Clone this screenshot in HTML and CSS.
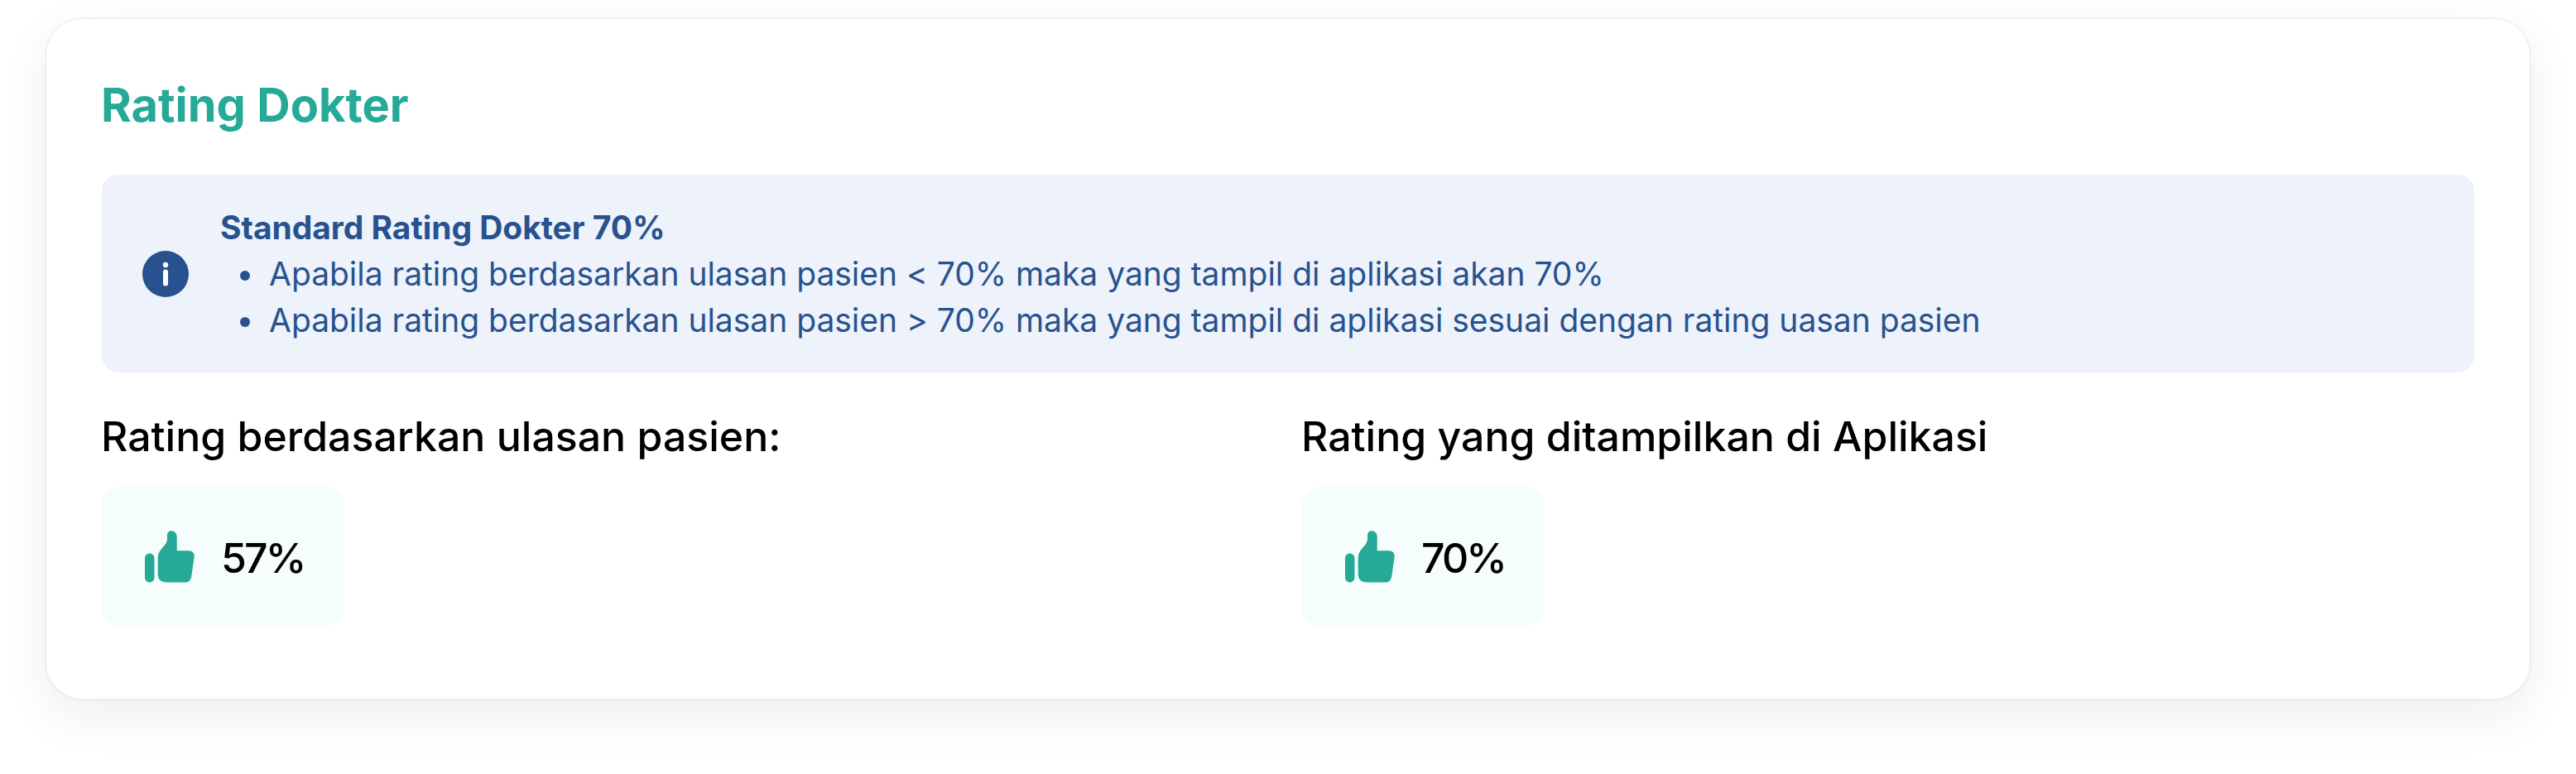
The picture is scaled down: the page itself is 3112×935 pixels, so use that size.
FILE: index.html
```html
<!DOCTYPE html>
<html lang="id">
<head>
    <meta charset="UTF-8">
    <meta name="viewport" content="width=device-width, initial-scale=1.0">
    <title>Rating Dokter</title>
    <link rel="stylesheet" href="styles.css">
</head>
<body>
    <div class="card">
        <h1>Rating Dokter</h1>
        <div class="alert">
            <svg class="info-icon" viewBox="0 0 56 56">
                <circle cx="28" cy="28" r="28" fill="#27528f"/>
                <circle cx="28" cy="17" r="3.2" fill="#fff"/>
                <rect x="25" y="22.5" width="6" height="20" rx="3" fill="#fff"/>
            </svg>
            <div class="alert-text">
                <strong>Standard Rating Dokter 70%</strong>
                <ul>
                    <li>Apabila rating berdasarkan ulasan pasien &lt; 70% maka yang tampil di aplikasi akan 70%</li>
                    <li>Apabila rating berdasarkan ulasan pasien &gt; 70% maka yang tampil di aplikasi sesuai dengan rating uasan pasien</li>
                </ul>
            </div>
        </div>
        <div class="ratings">
            <div class="rating">
                <h2>Rating berdasarkan ulasan pasien:</h2>
                <div class="score">
                    <svg class="thumb" viewBox="0 0 62 64">
                        <rect x="1" y="28.5" width="11.5" height="35" rx="5.7"/>
                        <path d="M28 10.5V7C28 3.5 30 1.3 33 1.3C37 1.3 39.7 4.5 39.7 9V25.2H53.5C58.5 25.2 61.3 28.3 60.6 33L57.3 56C56.5 61 54 63.5 49.5 63.5H28C20 63.5 16.7 60 16.7 52.5V34C16.7 30 17.8 27.5 20.3 24L25.2 18.2C27 15.8 28 13.5 28 10.5Z"/>
                    </svg>
                    <span>57%</span>
                </div>
            </div>
            <div class="rating">
                <h2>Rating yang ditampilkan di Aplikasi</h2>
                <div class="score">
                    <svg class="thumb" viewBox="0 0 62 64">
                        <rect x="1" y="28.5" width="11.5" height="35" rx="5.7"/>
                        <path d="M28 10.5V7C28 3.5 30 1.3 33 1.3C37 1.3 39.7 4.5 39.7 9V25.2H53.5C58.5 25.2 61.3 28.3 60.6 33L57.3 56C56.5 61 54 63.5 49.5 63.5H28C20 63.5 16.7 60 16.7 52.5V34C16.7 30 17.8 27.5 20.3 24L25.2 18.2C27 15.8 28 13.5 28 10.5Z"/>
                    </svg>
                    <span>70%</span>
                </div>
            </div>
        </div>
    </div>
</body>
</html>
```
FILE: styles.css
```css
* {
    margin: 0;
    padding: 0;
    box-sizing: border-box;
}
body {
    font-family: Inter, sans-serif;
    color: #000;
    background: #fff;
    min-height: 100vh;
    padding: 22px 55px 0;
}
.card {
    height: 823px;
    padding: 70px 67px 0;
    background: #fff;
    border: 1px solid #e3eaef;
    border-radius: 44px;
    box-shadow: 0 20px 60px rgba(20, 35, 60, 0.07), 0 1px 5px rgba(20, 35, 60, 0.03);
}
h1 {
    font-size: 56px;
    line-height: 68px;
    font-weight: 700;
    margin-left: -1px;
    color: #26a996;
}
.alert {
    display: flex;
    align-items: center;
    height: 239px;
    margin-top: 50px;
    padding: 0 49px;
    background: #eef2fa;
    border-radius: 20px;
    color: #27528f;
    font-size: 39px;
    line-height: 56px;
}
.info-icon {
    width: 56px;
    height: 56px;
    margin-right: 38px;
}
.alert-text {
    padding-top: 1px;
}
.alert strong {
    display: block;
    font-weight: 700;
    letter-spacing: -0.05px;
}
.alert ul {
    padding-left: 24px;
    list-style: none;
}
.alert li {
    display: flex;
    align-items: center;
    letter-spacing: -0.02px;
}
.alert li::before {
    content: "";
    width: 12px;
    height: 12px;
    margin: 4px 23px 0 0;
    border-radius: 50%;
    background: #27528f;
}
.ratings {
    display: grid;
    grid-template-columns: 1fr 1fr;
    gap: 34px;
    margin-top: 47px;
}
h2 {
    font-size: 50px;
    line-height: 60px;
    font-weight: 500;
    margin-left: -1px;
}
.score {
    display: inline-flex;
    align-items: center;
    width: 292px;
    height: 168px;
    margin-top: 31px;
    padding-left: 51px;
    background: #f6fdfd;
    border-radius: 20px;
    font-size: 50px;
    font-weight: 500;
    letter-spacing: -2.9px;
}
.score span {
    padding-top: 3px;
}
.thumb {
    width: 62px;
    height: 64px;
    margin-right: 31px;
    fill: #26a996;
}
```
